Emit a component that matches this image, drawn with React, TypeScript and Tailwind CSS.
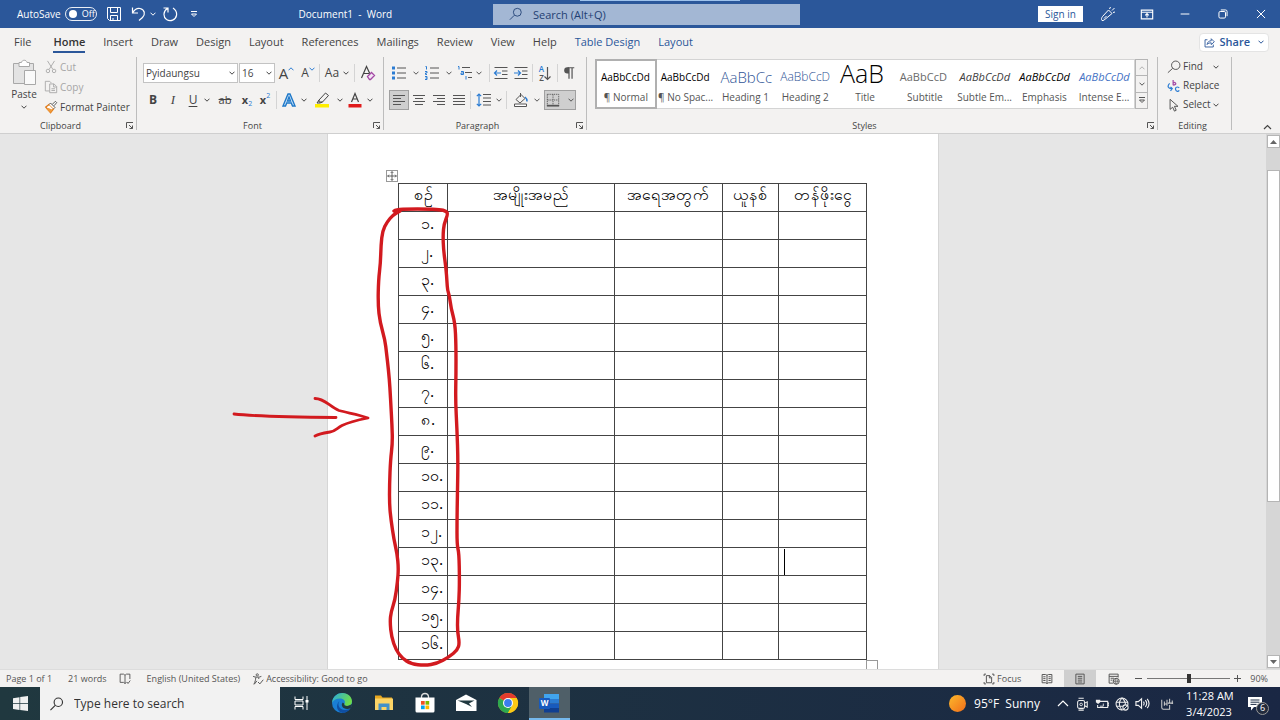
import type { ReactNode } from "react";
import clsx from "clsx";

const tabs = [
  "File",
  "Home",
  "Insert",
  "Draw",
  "Design",
  "Layout",
  "References",
  "Mailings",
  "Review",
  "View",
  "Help",
];

const headers = ["စဉ်", "အမျိုးအမည်", "အရေအတွက်", "ယူနစ်", "တန်ဖိုးငွေ"];

const rows = [
  "၁.",
  "၂.",
  "၃.",
  "၄.",
  "၅.",
  "၆.",
  "၇.",
  "၈.",
  "၉.",
  "၁၀.",
  "၁၁.",
  "၁၂.",
  "၁၃.",
  "၁၄.",
  "၁၅.",
  "၁၆.",
];

const styleItems = [
  { name: "¶ Normal", sample: "AaBbCcDd", look: "text-[10px] text-black" },
  { name: "¶ No Spac...", sample: "AaBbCcDd", look: "text-[10px] text-black" },
  { name: "Heading 1", sample: "AaBbCc", look: "text-[15px] font-light text-[#2f5496]" },
  { name: "Heading 2", sample: "AaBbCcD", look: "text-[12px] font-light text-[#2f5496]" },
  { name: "Title", sample: "AaB", look: "text-[25px] font-light text-black" },
  { name: "Subtitle", sample: "AaBbCcD", look: "text-[11px] text-[#6a6a6a]" },
  { name: "Subtle Em...", sample: "AaBbCcDd", look: "text-[11px] italic text-[#404040]" },
  { name: "Emphasis", sample: "AaBbCcDd", look: "text-[11px] italic text-black" },
  { name: "Intense E...", sample: "AaBbCcDd", look: "text-[11px] italic text-[#4472c4]" },
];

function Icon({
  size = 16,
  className,
  children,
}: {
  size?: number;
  className?: string;
  children: ReactNode;
}) {
  return (
    <svg
      width={size}
      height={size}
      viewBox="0 0 16 16"
      fill="none"
      stroke="currentColor"
      strokeWidth="1"
      className={clsx("shrink-0", className)}
      aria-hidden="true"
    >
      {children}
    </svg>
  );
}

function Chevron({ up = false }: { up?: boolean }) {
  return (
    <svg width="6" height="4" viewBox="0 0 6 4" fill="none" stroke="currentColor" className="shrink-0" aria-hidden="true">
      <path d={up ? "M.5 3.3 3 .8l2.5 2.5" : "M.5.7 3 3.2 5.5.7"} />
    </svg>
  );
}

function Tool({
  label,
  className = "w-5",
  children,
}: {
  label: string;
  className?: string;
  children: ReactNode;
}) {
  return (
    <button
      type="button"
      aria-label={label}
      className={clsx("flex h-5 shrink-0 items-center justify-center hover:bg-[#d8d8d8]", className)}
    >
      {children}
    </button>
  );
}

function Divider() {
  return <span className="mx-px h-[18px] w-px shrink-0 bg-[#d4d4d4]" />;
}

function Group({
  name,
  launcher = true,
  className,
  children,
}: {
  name: string;
  launcher?: boolean;
  className?: string;
  children: ReactNode;
}) {
  return (
    <section className={clsx("flex", className)} aria-label={name}>
      <div className="flex min-w-0 flex-1 flex-col">
        <div className="h-[62px]">{children}</div>
        <div className="flex h-[15px] items-center text-[9px] text-[#444]">
          <span className="flex-1 pr-1 text-center">{name}</span>
          {launcher && (
            <button type="button" aria-label={name + " settings"} className="mr-[2px]">
              <svg width="9" height="9" viewBox="0 0 9 9" fill="none" stroke="#555" aria-hidden="true">
                <path d="M1.5 7V1.5H8M4 4l3.5 3.5M7.5 4.5v3h-3" />
              </svg>
            </button>
          )}
        </div>
      </div>
      <span className="h-[73px] w-px bg-[#bdbdbd]" />
    </section>
  );
}

function Lines({ kind }: { kind: "left" | "center" | "right" | "justify" }) {
  const d = {
    left: "M2 3.5h12M2 6.5h8M2 9.5h12M2 12.5h8",
    center: "M2 3.5h12M4 6.5h8M2 9.5h12M4 12.5h8",
    right: "M2 3.5h12M6 6.5h8M2 9.5h12M6 12.5h8",
    justify: "M2 3.5h12M2 6.5h12M2 9.5h12M2 12.5h12",
  }[kind];
  return (
    <Icon>
      <path d={d} />
    </Icon>
  );
}

function TitleBar() {
  return (
    <header className="flex h-7 shrink-0 items-center bg-[#2b579a] text-[10px] text-white">
      <div className="flex flex-1 items-center pl-[17px]">
        <label className="flex items-center gap-1">
          AutoSave
          <input type="checkbox" role="switch" className="peer sr-only" />
          <span className="flex h-[14px] w-8 items-center gap-[5px] rounded-full border border-white/90 pl-[3px] text-[9px]">
            <span className="size-2 rounded-full bg-white" />
            Off
          </span>
        </label>
        <button type="button" aria-label="Save" className="ml-[9px]">
          <Icon>
            <path d="M1.5 1.5h13v13h-11l-2-2zM4.5 1.5v5h7v-5M4.5 14.5v-5h7v5M7 14v-2" />
          </Icon>
        </button>
        <button type="button" aria-label="Undo" className="ml-2">
          <Icon>
            <path d="M2.5 1.5v5.500H8M2.500 7C4.500 3.500 7 2 10 2.500c5 1 5.500 6 2.500 9L9 14.500" strokeWidth="1.2" />
          </Icon>
        </button>
        <button type="button" aria-label="Undo history" className="ml-1">
          <Chevron />
        </button>
        <button type="button" aria-label="Redo" className="ml-[6px]">
          <Icon>
            <path d="M1.500 2h4.500v4.500M5.500 2.500C1 5 1 11 4.500 13.500c4 2.500 9 .5 10-4 .5-3-.5-5.500-3.500-7.500" strokeWidth="1.2" />
          </Icon>
        </button>
        <button type="button" aria-label="Customize toolbar" className="ml-3">
          <svg width="8" height="7" viewBox="0 0 8 7" fill="none" stroke="currentColor" aria-hidden="true">
            <path d="M1 .5h6M1.500 3 4 5.500 6.500 3z" />
          </svg>
        </button>
        <h1 className="flex-1 text-center text-[10px]">Document1&nbsp; -&nbsp; Word</h1>
      </div>
      <div className="relative mr-1 w-[307px]">
        <span className="absolute -top-1 left-[87px] h-px w-40 bg-[#9fc3ec]" />
        <Icon size={14} className="absolute top-[3px] left-4 text-[#1f3f73]">
          <circle cx="9.500" cy="6" r="4.500" />
          <path d="m6 9.500-5 5" />
        </Icon>
        <input
          type="search"
          aria-label="Search"
          placeholder="Search (Alt+Q)"
          className="block h-[21px] w-full bg-[#a3b7d4] pl-10 text-[11px] text-[#1f3f73] placeholder:text-[#1f3f73] focus:outline-none"
        />
      </div>
      <div className="flex flex-1 items-center justify-end">
        <button type="button" className="mr-[17px] h-4 w-[45px] bg-white text-[10px] text-[#2b579a]">
          Sign in
        </button>
        <button type="button" aria-label="Coming soon" className="flex w-7 justify-start">
          <Icon>
            <path d="M2 14.500c-1-1.500-.5-2.500.5-4L8.500 4l3.500 3.500-6 5c-1.500 1-2.500 2.500-4 2zM4 12.500l2.500-2.500M9.500 3l1-2M12 4.500 14.500 2M13 6.500l2-.5" />
          </Icon>
        </button>
        <button type="button" aria-label="Ribbon display options" className="flex w-[38px] justify-center">
          <Icon size={14}>
            <path d="M1.500 3.500h13v10h-13zM1.500 6h13M8 12V8M6 9.500l2-2 2 2" strokeWidth="1.3" />
          </Icon>
        </button>
        <button type="button" aria-label="Minimize" className="flex w-[38px] justify-center">
          <Icon size={10}>
            <path d="M1 8h14" strokeWidth="1.600" />
          </Icon>
        </button>
        <button type="button" aria-label="Restore" className="flex w-[38px] justify-center">
          <Icon size={10}>
            <rect x="1.500" y="4" width="10.500" height="10.500" rx="2" strokeWidth="1.600" />
            <path d="M4.500 1.500h7.500q2.500 0 2.500 2.500v7.500" strokeWidth="1.600" />
          </Icon>
        </button>
        <button type="button" aria-label="Close" className="flex w-[38px] justify-center">
          <Icon size={10}>
            <path d="m1.500 1.500 13 13m0-13-13 13" strokeWidth="1.600" />
          </Icon>
        </button>
      </div>
    </header>
  );
}

function TabBar() {
  return (
    <nav className="flex h-7 shrink-0 items-center justify-between pr-[11px] pl-[14px] text-[11px] text-[#444]">
      <div className="flex items-center gap-[18px]">
        {tabs.map((tab) => (
          <button
            key={tab}
            type="button"
            className={clsx(
              "flex h-[22px] items-center border-y-2 border-transparent",
              tab === "File" && "mr-1",
              tab === "Home" && "border-b-[#2b579a] font-semibold text-[#333]",
            )}
          >
            {tab}
          </button>
        ))}
        <button type="button" className="text-[#2b579a]">
          Table Design
        </button>
        <button type="button" className="text-[#2b579a]">
          Layout
        </button>
      </div>
      <button
        type="button"
        className="flex h-[19px] items-center gap-1 rounded-sm border border-[#e4e4e4] bg-white px-1 font-semibold text-[#2b579a]"
      >
        <Icon size={11}>
          <path d="M5 4H1.500v10.500h12V11M4.500 11c.5-4 3-5.500 6-5.500V2.500L15 7l-4.500 4V8.500c-2.500 0-4.500.5-6 2.500z" strokeWidth="1.300" />
        </Icon>
        Share
        <span className="ml-1">
          <Chevron />
        </span>
      </button>
    </nav>
  );
}

function ClipboardGroup() {
  return (
    <Group name="Clipboard" className="w-[137px]">
      <div className="flex pl-3 text-[10px]">
        <button type="button" className="flex w-6 flex-col items-center pt-[2px] text-[#444]">
          <svg width="24" height="27" viewBox="0 0 24 27" fill="none" stroke="#a8a8a8" aria-hidden="true">
            <path d="M7.500 4.500H1.500v20h20v-20h-5" fill="#e3e3e3" />
            <path d="M7 7.500v-4h2.500c.5-3 5-3 5.500 0h2.500v4z" fill="#fff" />
            <path d="M12.500 11.500h11v14h-11z" fill="#fafafa" />
          </svg>
          <span className="mb-[3px] leading-4">Paste</span>
          <Chevron />
        </button>
        <div className="ml-2 flex flex-col text-[#a6a6a6]">
          <button type="button" disabled className="flex h-5 items-center gap-[2px]">
            <Icon size={14}>
              <path d="M4 1l6 9.500M12 1 6 10.500" />
              <circle cx="4.500" cy="12.500" r="2" />
              <circle cx="11.500" cy="12.500" r="2" />
            </Icon>
            Cut
          </button>
          <button type="button" disabled className="flex h-5 items-center gap-[2px]">
            <Icon size={14}>
              <path d="M6 12.500H1.500v-11h5l2 2M6.500 4.500h5l3 3v7h-8zM11 4.500V8h3.500M8.500 10h4M8.500 12h4" />
            </Icon>
            Copy
          </button>
          <button type="button" className="flex h-5 items-center gap-[2px] text-[#444]">
            <Icon size={14}>
              <path d="m2 8 4-3 5 5-3.500 4.500z" fill="#fff" stroke="#e07b1a" strokeWidth="1.500" />
              <path d="m3 10.500 4.500 4L10 11 5 9z" fill="#f09a3a" stroke="none" />
              <path d="m6 5 1.500-1.500 5 5L11 10M9.500 5 13 1.500l1.500 1.500-3 3.500" fill="#fff" />
            </Icon>
            Format Painter
          </button>
        </div>
      </div>
    </Group>
  );
}

function FontGroup() {
  return (
    <Group name="Font" className="w-[247px]">
      <div className="flex flex-col gap-[7px] pt-[6px] pl-[6px] text-[#444]">
        <div className="flex h-5 items-center">
          <button
            type="button"
            aria-label="Font name"
            className="flex h-5 w-[95px] items-center justify-between border border-[#c3c3c3] bg-white px-[2px] text-[10px]"
          >
            Pyidaungsu
            <Chevron />
          </button>
          <button
            type="button"
            aria-label="Font size"
            className="ml-px flex h-5 w-9 items-center justify-between border border-[#c3c3c3] bg-white px-[2px] text-[10px]"
          >
            16
            <Chevron />
          </button>
          <Tool label="Grow font" className="w-[23px]">
            <span className="text-[15px] leading-5">A</span>
            <span className="flex self-start pt-1 text-[#2b7cd3]">
              <Chevron up />
            </span>
          </Tool>
          <Tool label="Shrink font" className="w-5">
            <span className="text-[12px] leading-5">A</span>
            <span className="flex self-start pt-1 text-[#2b7cd3]">
              <Chevron />
            </span>
          </Tool>
          <Divider />
          <Tool label="Change case" className="w-8 gap-1">
            <span className="text-[12px]">Aa</span>
            <Chevron />
          </Tool>
          <Divider />
          <Tool label="Clear formatting" className="w-6">
            <Icon>
              <path d="M1.500 13 6.500 1.500 10 9M3.500 8.500H9" strokeWidth="1.200" />
              <path d="m7.500 11.500 4-4 3 3-4 4h-1z" stroke="#a349a4" fill="#f3e3f5" strokeWidth="1.300" />
            </Icon>
          </Tool>
        </div>
        <div className="flex h-5 items-center text-[12px]">
          <Tool label="Bold">
            <b>B</b>
          </Tool>
          <Tool label="Italic">
            <i className="font-['Liberation_Serif',serif] text-[13px]">I</i>
          </Tool>
          <Tool label="Underline">
            <u className="underline-offset-2">U</u>
          </Tool>
          <Tool label="Underline style" className="w-2">
            <Chevron />
          </Tool>
          <Tool label="Strikethrough" className="w-7">
            <s className="text-[11px]">ab</s>
          </Tool>
          <Tool label="Subscript" className="w-4">
            <b className="text-[11px]">x</b>
            <span className="self-end text-[7px] leading-3 text-[#2b7cd3]">2</span>
          </Tool>
          <Tool label="Superscript">
            <b className="text-[11px]">x</b>
            <span className="self-start text-[7px] leading-3 text-[#2b7cd3]">2</span>
          </Tool>
          <Divider />
          <Tool label="Text effects" className="w-[22px]">
            <Icon>
              <path
                d="M2 14 7 2h2l5 12h-2.500l-1.200-3H5.700l-1.200 3zM6.500 9h3L8 5z"
                fill="#cfe6fa"
                stroke="#1e78c8"
                strokeWidth="1.400"
              />
            </Icon>
          </Tool>
          <Tool label="Text effects menu" className="w-2">
            <Chevron />
          </Tool>
          <Tool label="Highlight" className="w-7">
            <Icon>
              <path d="m5 8 6.500-7 3 2.500L8.500 10H5zM5 8l-2 3h3l2.500-1" />
              <path d="M1 12h14v3.500H1z" fill="#ffee00" stroke="none" />
            </Icon>
          </Tool>
          <Tool label="Highlight menu" className="w-2">
            <Chevron />
          </Tool>
          <Tool label="Font color" className="w-[22px]">
            <Icon>
              <path d="M4.500 10 8 1.500 11.500 10M5.500 7h5" strokeWidth="1.200" />
              <path d="M1.500 12h13v3.500h-13z" fill="#e01b1b" stroke="none" />
            </Icon>
          </Tool>
          <Tool label="Font color menu" className="w-2">
            <Chevron />
          </Tool>
        </div>
      </div>
    </Group>
  );
}

function ParagraphGroup() {
  return (
    <Group name="Paragraph" className="w-[203px]">
      <div className="flex flex-col gap-[7px] pt-[6px] pl-[5px] text-[#555]">
        <div className="flex h-5 items-center">
          <Tool label="Bullets">
            <Icon>
              <path d="M6 3h9M6 8h9M6 13h9" />
              <path d="M1 1.500h3v3H1zM1 6.500h3v3H1zM1 11.500h3v3H1z" fill="#2b7cd3" stroke="none" />
            </Icon>
          </Tool>
          <Tool label="Bullets menu" className="w-[13px]">
            <Chevron />
          </Tool>
          <Tool label="Numbering">
            <Icon>
              <path d="M6 3h9M6 8h9M6 13h9" />
              <path d="M1.500 1.500h1v3M1 6.500h2v1.500H1.500v1.500H3M1 11.500h2v3H1M1.500 13H3" stroke="#2b7cd3" />
            </Icon>
          </Tool>
          <Tool label="Numbering menu" className="w-[13px]">
            <Chevron />
          </Tool>
          <Tool label="Multilevel list">
            <Icon>
              <path d="M5 2.500h8M8 7.500h7M11 12.500h4" />
              <path d="M1 1.500h1v3M4 6.500h2.500v3H4V8h2M9 11v3.500" stroke="#2b7cd3" />
            </Icon>
          </Tool>
          <Tool label="Multilevel menu" className="w-2">
            <Chevron />
          </Tool>
          <span className="w-[5px]" />
          <Divider />
          <Tool label="Decrease indent">
            <Icon>
              <path d="M1.500 2.500h13M9 6h5.500M9 9.500h5.500M1.500 13.500h13" />
              <path d="M8 8H2M4 5.500 1.500 8 4 10.500" stroke="#2b7cd3" strokeWidth="1.200" />
            </Icon>
          </Tool>
          <Tool label="Increase indent">
            <Icon>
              <path d="M1.500 2.500h13M9 6h5.500M9 9.500h5.500M1.500 13.500h13" />
              <path d="M1 8h6M5 5.500 7.500 8 5 10.500" stroke="#2b7cd3" strokeWidth="1.200" />
            </Icon>
          </Tool>
          <Divider />
          <Tool label="Sort" className="w-[22px]">
            <span className="flex flex-col text-[8px] leading-[9px] font-semibold">
              <span className="text-[#2b7cd3]">A</span>
              <span>Z</span>
            </span>
            <svg width="7" height="15" viewBox="0 0 7 15" fill="none" stroke="currentColor" aria-hidden="true">
              <path d="M3.500 1v12M.5 10.500l3 3 3-3" strokeWidth="1.200" />
            </svg>
          </Tool>
          <Divider />
          <Tool label="Show paragraph marks">
            <Icon size={14}>
              <path d="M8 2v12.500M11.500 2v12.500M6.500 2H14" strokeWidth="1.400" />
              <path d="M8 1.500H6a3.500 3.500 0 0 0 0 7h2z" fill="currentColor" stroke="none" />
            </Icon>
          </Tool>
        </div>
        <div className="flex h-5 items-center">
          <Tool label="Align left" className="w-5 border border-[#a0a0a0] bg-[#cfcfcf]">
            <Lines kind="left" />
          </Tool>
          <Tool label="Center">
            <Lines kind="center" />
          </Tool>
          <Tool label="Align right">
            <Lines kind="right" />
          </Tool>
          <Tool label="Justify">
            <Lines kind="justify" />
          </Tool>
          <Divider />
          <Tool label="Line spacing" className="w-[33px] gap-1">
            <Icon>
              <path d="M7 2.500h8M7 6h8M7 9.500h8M7 13h8" />
              <path d="M3 2v12M.8 4.200 3 2l2.200 2.200M.8 11.800 3 14l2.200-2.200" stroke="#2b7cd3" strokeWidth="1.200" />
            </Icon>
            <Chevron />
          </Tool>
          <Divider />
          <Tool label="Shading" className="w-9 gap-[5px]">
            <Icon>
              <path d="m3 7.500 5-5 4 4-5 4.500zM7.500 5V1" />
              <path d="M12 5c1.500 1 2 2 2 4.500" stroke="#2b7cd3" strokeWidth="1.500" />
              <path d="M1.500 12h12v2.500h-12z" fill="#fff" />
            </Icon>
            <Chevron />
          </Tool>
          <Tool label="Borders" className="w-8 gap-2 border border-[#a0a0a0] bg-[#cfcfcf]">
            <Icon size={14}>
              <path d="M1.500 1.500h13v13M1.500 1.500v13M8 1.500v13M1.500 8h13" strokeDasharray="1.500 1" />
              <path d="M1 14.500h14" strokeWidth="2" />
            </Icon>
            <Chevron />
          </Tool>
        </div>
      </div>
    </Group>
  );
}

function StylesGroup() {
  return (
    <Group name="Styles" className="min-w-0 flex-1">
      <div className="flex pt-[2px] pr-[9px] pl-2">
        <div className="flex h-[50px] min-w-0 flex-1 border border-[#d4d4d4] bg-white">
          {styleItems.map((item, i) => (
            <button
              key={item.name}
              type="button"
              className={clsx(
                "flex h-12 min-w-0 flex-1 flex-col items-center justify-end",
                i === 0 && "outline-2 -outline-offset-1 outline-[#b0b0b0]",
              )}
            >
              <span
                className={clsx(
                  "flex h-[30px] w-[50px] items-center leading-[22px] whitespace-nowrap",
                  item.name === "Title" ? "pb-1" : "pt-1",
                  item.look,
                )}
              >
                {item.sample}
              </span>
              <span className="h-[18px] text-[10px] whitespace-nowrap text-[#555]">{item.name}</span>
            </button>
          ))}
        </div>
        <div className="flex h-[50px] w-[13px] flex-col divide-y divide-[#b5b5b5] border border-[#b5b5b5] text-[#555]">
          <button type="button" aria-label="Previous styles" className="flex flex-1 items-center justify-center text-[#b0b0b0]">
            <Chevron up />
          </button>
          <button type="button" aria-label="Next styles" className="flex flex-1 items-center justify-center">
            <Chevron />
          </button>
          <button type="button" aria-label="More styles" className="flex flex-1 items-center justify-center">
            <svg width="8" height="7" viewBox="0 0 8 7" fill="none" stroke="currentColor" aria-hidden="true">
              <path d="M1 .5h6M1.500 3 4 5.500 6.500 3z" />
            </svg>
          </button>
        </div>
      </div>
    </Group>
  );
}

function EditingGroup() {
  return (
    <Group name="Editing" launcher={false} className="w-[74px]">
      <div className="flex flex-col pl-[9px] text-[10px] text-[#444]">
        <button type="button" className="flex h-[19px] items-center gap-[2px]">
          <Icon size={14}>
            <circle cx="10" cy="6" r="4.800" />
            <path d="m6.500 9.500-5.500 5" />
          </Icon>
          Find
          <span className="ml-2">
            <Chevron />
          </span>
        </button>
        <button type="button" className="flex h-[19px] items-center gap-[2px]">
          <Icon size={14}>
            <path d="M7 1v6M7 4.500c3-2 5 2.500 0 2.500" stroke="#a349a4" strokeWidth="1.400" />
            <path d="M3 5C0 8 1 11 5.500 11M4 9l2 2-2 2.500M14 10c-3-2-5 0-4 2.500.5 2 3 2 4 .5" stroke="#2b7cd3" strokeWidth="1.400" />
          </Icon>
          Replace
        </button>
        <button type="button" className="flex h-[19px] items-center gap-[2px]">
          <Icon size={14}>
            <path d="M3.500 1.500v11.500l3-2.500 2 4.500 2-1-2-4.500h4z" />
          </Icon>
          Select
          <Chevron />
        </button>
      </div>
    </Group>
  );
}

function Ribbon() {
  return (
    <div className="flex h-[78px] shrink-0 border-b border-[#cfcfcf] pt-px">
      <ClipboardGroup />
      <FontGroup />
      <ParagraphGroup />
      <StylesGroup />
      <EditingGroup />
      <div className="flex w-12 items-end justify-end pr-2 pb-[3px] text-[#444]">
        <button type="button" aria-label="Collapse the ribbon">
          <svg width="9" height="6" viewBox="0 0 9 6" fill="none" stroke="currentColor" aria-hidden="true">
            <path d="M1 5l3.500-3.500L8 5" strokeWidth="1.200" />
          </svg>
        </button>
      </div>
    </div>
  );
}

type Point = [number, number];

// Points of the hand-drawn loop round the number column
const loop: Point[] = [
  [394, 211], [396, 209.5], [410, 209], [425, 209], [440, 209.5], [446, 211], [448, 214], [444, 224],
  [443, 235], [443.5, 250], [446, 268], [447, 282], [447.5, 290], [449.5, 296], [451, 308], [455, 323],
  [456, 345], [456, 375], [455.5, 400], [457, 430], [458, 460], [457.5, 490], [457, 520], [457, 545],
  [459, 553], [459.5, 580], [459, 600], [457.5, 618], [457.5, 632], [459.5, 643], [457.5, 650],
  [449, 657], [437, 663.5], [425, 665.5], [411, 664], [402, 658], [396, 650], [391.5, 637], [390, 622],
  [391, 612], [395, 600], [397.5, 582], [398.5, 568], [397, 553], [394, 540], [391, 520], [389.5, 505],
  [389.5, 485], [390.5, 460], [392.5, 443], [392, 425], [391, 408], [390, 388], [388.5, 370], [386.5, 353],
  [385, 340], [380, 322], [378, 305], [378.5, 280], [380.5, 263], [381, 245], [382.5, 231], [387, 222],
  [393, 215], [400, 211],
];

function smooth(points: Point[]) {
  let d = `M${points[0][0]} ${points[0][1]}`;
  for (let i = 1; i < points.length - 1; i++) {
    const [x, y] = points[i];
    const [nx, ny] = points[i + 1];
    d += `Q${x} ${y} ${(x + nx) / 2} ${(y + ny) / 2}`;
  }
  const last = points[points.length - 1];
  return d + `L${last[0]} ${last[1]}`;
}

function Annotation() {
  return (
    <svg
      className="pointer-events-none absolute top-0 -left-[101px]"
      width="250"
      height="540"
      viewBox="227 134 250 540"
      fill="none"
      stroke="#d21a1f"
      strokeWidth="3.4"
      strokeLinecap="round"
      strokeLinejoin="round"
      aria-hidden="true"
    >
      <path d={smooth(loop)} />
      <path
        strokeWidth="2.8"
        d="M234 414c22 2.500 48 3 102 3.500M315 398.500c10 0 14 8 24 12 9 2.500 20 4 29 7.500-10 2-19 4-26 7.500-5 2.500-7 6-12 6.500-6 1-10 1.500-15 4"
      />
    </svg>
  );
}

function DocumentArea() {
  return (
    <main className="flex min-h-0 flex-1 overflow-hidden">
      <div className="flex flex-1 justify-center overflow-hidden bg-[#e6e6e6]">
        <article className="relative w-[612px] shrink-0 border-x border-[#d6d6d6] bg-white px-[70px] pt-[49px]">
          <span className="absolute top-9 left-[58px] flex size-3 items-center justify-center border border-[#999] bg-white text-[#444]">
            <Icon size={10}>
              <path d="M8 1v14M1 8h14M6 3l2-2 2 2M6 13l2 2 2-2M3 6 1 8l2 2M13 6l2 2-2 2" strokeWidth="1.300" />
            </Icon>
          </span>
          <table className="w-[468px] table-fixed border-collapse text-black">
            <colgroup>
              <col className="w-[49px]" />
              <col className="w-[167px]" />
              <col className="w-[108px]" />
              <col className="w-14" />
              <col className="w-[88px]" />
            </colgroup>
            <thead>
              <tr className="h-7">
                {headers.map((h) => (
                  <th key={h} className="border border-[#444] p-0 align-top text-[16px] leading-5 font-normal whitespace-nowrap">
                    {h}
                  </th>
                ))}
              </tr>
            </thead>
            <tbody>
              {rows.map((n) => (
                <tr key={n} className="h-7">
                  <td className="border border-[#444] p-0 pl-[22px] align-top text-[16px] leading-[22px] whitespace-nowrap">{n}</td>
                  <td className="border border-[#444]" />
                  <td className="border border-[#444]" />
                  <td className="border border-[#444]" />
                  <td className="border border-[#444] p-0">
                    {n === "၁၃." && <span className="ml-[5px] block h-[26px] w-px bg-black" />}
                  </td>
                </tr>
              ))}
            </tbody>
          </table>
          <span className="ml-[468px] block size-3 border border-[#999]" />
          <Annotation />
        </article>
      </div>
      <div className="flex w-[14px] shrink-0 flex-col items-center bg-[#d6d6d6]">
        <button type="button" aria-label="Scroll up" className="mt-px flex size-[13px] items-center justify-center border border-[#b5b5b5] bg-white">
          <svg width="7" height="4" viewBox="0 0 7 4" fill="#666" aria-hidden="true">
            <path d="M0 4 3.500 0 7 4z" />
          </svg>
        </button>
        <div className="mt-[22px] h-[332px] w-[13px] border border-[#b5b5b5] bg-white" />
        <button type="button" aria-label="Scroll down" className="mt-auto mb-px flex size-[13px] items-center justify-center border border-[#b5b5b5] bg-white">
          <svg width="7" height="4" viewBox="0 0 7 4" fill="#666" aria-hidden="true">
            <path d="M0 0 3.500 4 7 0z" />
          </svg>
        </button>
      </div>
    </main>
  );
}

function StatusBar() {
  return (
    <footer className="flex h-[18px] shrink-0 items-center justify-between border-t border-[#dcdcdc] text-[9px] text-[#555]">
      <div className="flex items-center pl-[6px]">
        <span>Page 1 of 1</span>
        <span className="ml-4">21 words</span>
        <button type="button" aria-label="Proofing" className="ml-3">
          <Icon size={12}>
            <path d="M8 3 6 1.500H1.500v11H6L8 14l2-1.500M8 3l2-1.500h4.500V8M8 3v11M10.500 12l1.500 2 3-4" strokeWidth="1.200" />
          </Icon>
        </button>
        <span className="ml-4">English (United States)</span>
        <button type="button" className="ml-3 flex items-center gap-[2px]">
          <Icon size={12}>
            <circle cx="7" cy="2.500" r="1.500" strokeWidth="1.200" />
            <path d="M1.500 4.500c3 1.500 8 1.500 11 0M5 6c0 3-1 6-2.500 9M9 6v2M3 15l3.500-4.500M8 12l2.500 2.500L15 9" strokeWidth="1.300" />
          </Icon>
          Accessibility: Good to go
        </button>
      </div>
      <div className="flex h-full items-center pr-3">
        <button type="button" className="flex items-center gap-[2px]">
          <Icon size={12}>
            <path d="M4 1.500H1.500V4M12 1.500h2.500V4M4 14.500H1.500V12M12 14.500h2.500V12M4.500 3.500h4.500l2.500 2.500v7h-7zM8.500 3.500V6.500h3" strokeWidth="1.300" />
          </Icon>
          Focus
        </button>
        <button type="button" aria-label="Read mode" className="ml-5">
          <Icon size={12}>
            <path d="M8 3v11M8 3 6 2H1.500v11H6l2 1 2-1h4.500V2H10zM3 5h3M3 7.500h3M3 10h3M10 5h3M10 7.500h3M10 10h3" strokeWidth="1.300" />
          </Icon>
        </button>
        <button type="button" aria-label="Print layout" className="ml-[11px] flex h-full w-8 items-center justify-center bg-[#cfcfcf]">
          <Icon size={12}>
            <path d="M2.500 1.500h11v13h-11zM5 4.500h6M5 7h6M5 9.500h6M5 12h6" strokeWidth="1.300" />
          </Icon>
        </button>
        <button type="button" aria-label="Web layout" className="ml-3">
          <Icon size={12}>
            <path d="M7 13.500H1.500v-12h12V6M1.500 4.500h12M3.500 7H8M3.500 9.500H6" strokeWidth="1.300" />
            <circle cx="11" cy="11" r="4" strokeWidth="1.300" />
            <path d="M7 11h8M11 7c-2 2-2 6 0 8 2-2 2-6 0-8" />
          </Icon>
        </button>
        <button type="button" aria-label="Zoom out" className="ml-[15px] w-2">
          <svg width="7" height="7" viewBox="0 0 7 7" stroke="currentColor" aria-hidden="true">
            <path d="M0 3.500h7" />
          </svg>
        </button>
        <input
          type="range"
          aria-label="Zoom"
          min="10"
          max="190"
          defaultValue="100"
          className="ml-1 h-3 w-[83px] appearance-none bg-[linear-gradient(#777,#777)] bg-[length:100%_1px] bg-center bg-no-repeat [&::-webkit-slider-thumb]:h-[9px] [&::-webkit-slider-thumb]:w-1 [&::-webkit-slider-thumb]:appearance-none [&::-webkit-slider-thumb]:bg-[#333]"
        />
        <button type="button" aria-label="Zoom in" className="ml-1 w-2">
          <svg width="7" height="7" viewBox="0 0 7 7" stroke="currentColor" aria-hidden="true">
            <path d="M0 3.500h7M3.500 0v7" />
          </svg>
        </button>
        <span className="ml-2">90%</span>
      </div>
    </footer>
  );
}

function TaskButton({ label, active, children }: { label: string; active?: boolean; children: ReactNode }) {
  return (
    <button
      type="button"
      aria-label={label}
      className={clsx(
        "flex flex-1 items-center justify-center border-b-2",
        active ? "border-[#76b9ed] bg-[#4f5f68]" : "border-transparent",
      )}
    >
      <svg width="22" height="22" viewBox="0 0 22 22" fill="none" aria-hidden="true">
        {children}
      </svg>
    </button>
  );
}

function Taskbar() {
  return (
    <div className="flex h-[33px] shrink-0 bg-linear-to-r from-[#20383f] to-[#1a2744] text-white">
      <button type="button" aria-label="Start" className="flex w-10 items-center justify-center">
        <svg width="15" height="15" viewBox="0 0 15 15" fill="#f0f0f0" aria-hidden="true">
          <path d="M0 2.200 6.500 1.200v6H0zM7.200 1.100 15 0v7.200H7.200zM0 7.900h6.500v6L0 12.900zM7.200 7.900H15V15l-7.800-1.100z" />
        </svg>
      </button>
      <label className="flex w-60 items-center gap-[10px] bg-[#f2f2f2] pl-[10px] text-[#333]">
        <Icon size={14}>
          <circle cx="9.500" cy="6" r="4.800" strokeWidth="1.300" />
          <path d="m6 9.500-5.500 5.500" strokeWidth="1.300" />
        </Icon>
        <input
          type="text"
          aria-label="Taskbar search"
          placeholder="Type here to search"
          className="w-full bg-transparent text-[12px] placeholder:text-[#333] focus:outline-none"
        />
      </label>
      <div className="flex w-[290px]">
        <TaskButton label="Task view">
          <path d="M5 4.500v3h8v-3M5 17.500v-3h8v3M5 9h8v4H5zM17 4v14" stroke="#fff" />
          <path d="M15.500 8h3v2.500h-3z" fill="#fff" />
        </TaskButton>
        <TaskButton label="Edge">
          <defs>
            <linearGradient id="edgeTop" x1="0" y1="0" x2="1" y2=".4">
              <stop offset="0" stopColor="#2aa9e0" />
              <stop offset="1" stopColor="#6ddc4c" />
            </linearGradient>
          </defs>
          <circle cx="11" cy="11" r="10" fill="#1a7fd4" />
          <path d="M1 11C1.500 4 7 1 11.500 1 17 1 21 5 21 9.500c0 3-2 4.500-5 4.500-2 0-3.500-.8-2.500-2.200C15 9 12.500 6.500 9 6.500c-4 0-7 2-8 4.500z" fill="url(#edgeTop)" />
          <path d="M8.500 9C6 12 8 18 14 18c2.500 0 4-.7 5.500-1.700C17.500 19.500 14.500 21 11.500 21 6 20 4 13 8.500 9z" fill="#0f4fa3" />
          <path d="M19.500 16.300C17 17.500 12.500 17.500 11 14c-.5-1.500 0-2.500.8-3.400 1.700 1 1.700 1.400 1.500 2.200 0 1.200 5 2 7.500-1 .3 2-.3 3.500-1.300 4.500z" fill="#20383f" />
        </TaskButton>
        <TaskButton label="File Explorer">
          <path d="M2 3.500h6l1.500 2H19v3H2z" fill="#e8a820" />
          <path d="M2 6.500h18v11.500H2z" fill="#fcd466" />
          <path d="M5.500 18v-6.500h11V18h-3v-3h-5v3z" fill="#4390c9" />
        </TaskButton>
        <TaskButton label="Microsoft Store">
          <path d="M7.500 6V4.500C8 .5 14 .5 14.500 4.500V6" stroke="#ddd" strokeWidth="1.300" />
          <path d="M1.500 5.500h19V19q0 1.500-1.500 1.500H3Q1.500 20.500 1.500 19z" fill="#fff" />
          <path d="M7 9h3.700v3.700H7z" fill="#f25022" />
          <path d="M11.500 9h3.700v3.700h-3.700z" fill="#7fba00" />
          <path d="M7 13.500h3.700v3.700H7z" fill="#00a4ef" />
          <path d="M11.500 13.500h3.700v3.700h-3.700z" fill="#ffb900" />
        </TaskButton>
        <TaskButton label="Mail">
          <path d="M1 8 11 2.500 21.500 8v11H1z" fill="#fff" />
          <path d="M2.500 8.500h17L14 11.500l3 3.500-6-3z" fill="#20383f" />
        </TaskButton>
        <TaskButton label="Chrome">
          <circle cx="11" cy="11" r="10" fill="#fbc916" />
          <path d="M11 11 2.300 6A10 10 0 0 1 19.700 6z" fill="#e33b2e" />
          <path d="M11 11 2.300 6A10 10 0 0 0 11 21l4.300-7.500z" fill="#2da94f" />
          <path d="M11 6h8.700a10 10 0 0 1-8.700 15l4.300-7.500z" fill="#fbc916" />
          <circle cx="11" cy="11" r="5" fill="#fff" />
          <circle cx="11" cy="11" r="3.900" fill="#3b7ded" />
        </TaskButton>
        <TaskButton label="Word" active>
          <path d="M6 2h15v5H6z" fill="#41a5ee" />
          <path d="M6 7h15v4.500H6z" fill="#2b7cd3" />
          <path d="M6 11.500h15V16H6z" fill="#185abd" />
          <path d="M6 16h15v4.500H6z" fill="#103f91" />
          <rect x="1" y="6" width="11" height="11" rx="1" fill="#185abd" />
          <text x="6.500" y="14.300" textAnchor="middle" fontSize="8" fontWeight="700" fill="#fff">
            W
          </text>
        </TaskButton>
      </div>
      <div className="ml-auto flex items-center text-[11px]">
        <button type="button" className="flex items-center gap-2">
          <span className="size-[17px] rounded-full bg-linear-to-br from-[#fbb82c] to-[#f06c1a]" />
          <span className="text-[12px] whitespace-nowrap">95°F&nbsp; Sunny</span>
        </button>
        <button type="button" aria-label="Show hidden icons" className="ml-4 flex w-[14px] justify-center">
          <svg width="12" height="7" viewBox="0 0 12 7" fill="none" stroke="#fff" aria-hidden="true">
            <path d="m1 6 5-5 5 5" strokeWidth="1.200" />
          </svg>
        </button>
        <div className="ml-1 flex items-center gap-[6px] text-[#eee]">
          <Icon size={14} className="ml-px">
            <rect x="3" y="4" width="8" height="9" rx="2" strokeWidth="1.200" />
            <path d="m11 7 3-1.500v6L11 10M4 1.500h6M4 15h6" strokeWidth="1.200" />
            <circle cx="7" cy="8.500" r="1.500" />
          </Icon>
          <Icon size={14}>
            <path d="M4 5h10.500v7H3V9M14.500 7H16v3h-1.500" strokeWidth="1.200" />
            <path d="M1 3h5v3L3.500 8 1 6z" fill="#eee" stroke="none" />
            <path d="M5.500 10.500h4v-3" />
          </Icon>
          <Icon size={14}>
            <circle cx="8" cy="8" r="6.800" strokeWidth="1.200" />
            <path d="M8 1C4 5 4 11 8 15M8 1c4 4 4 7 3.500 8M1.500 6h13M1.500 10.500H9" strokeWidth="1.200" />
            <circle cx="12" cy="12" r="3" fill="#1b2a43" strokeWidth="1.200" />
            <path d="m10 14 4-4" />
          </Icon>
          <Icon size={15}>
            <path d="M1 6h2.500L7 3v10l-3.500-3H1zM9 6q1.500 2 0 4M11 4.500q3 3.500 0 7M13 3q4 5 0 10" strokeWidth="1.200" />
          </Icon>
        </div>
        <Icon size={14} className="ml-[10px] text-[#ccc]">
          <path d="M2 3v9q0 2 2 2h7V9M5 5v5M8 3v7M5 8h3M11 2v5M14 4v4M9 7h6" strokeWidth="1.200" />
        </Icon>
        <div className="ml-3 w-[46px] text-center text-[11px] leading-4 whitespace-nowrap">
          <div>11:28 AM</div>
          <div>3/4/2023</div>
        </div>
        <button type="button" aria-label="Notifications" className="relative mr-3 ml-4 size-5">
          <svg width="15" height="14" viewBox="0 0 15 14" fill="none" aria-hidden="true">
            <path d="M0 0h14v10H6l-3 3.500V10H0z" fill="#fff" />
            <path d="M2.500 3h9M2.500 5.200h9M2.500 7.400h6" stroke="#1b2a43" />
          </svg>
          <span className="absolute -right-px -bottom-px flex size-[13px] items-center justify-center rounded-full border border-[#999] bg-[#222b3d] text-[9px]">
            6
          </span>
        </button>
      </div>
    </div>
  );
}

export default function App() {
  return (
    <div className="flex h-screen flex-col overflow-hidden bg-[#f3f2f1] font-['Open_Sans','Noto_Sans',sans-serif]">
      <TitleBar />
      <TabBar />
      <Ribbon />
      <DocumentArea />
      <StatusBar />
      <Taskbar />
    </div>
  );
}
